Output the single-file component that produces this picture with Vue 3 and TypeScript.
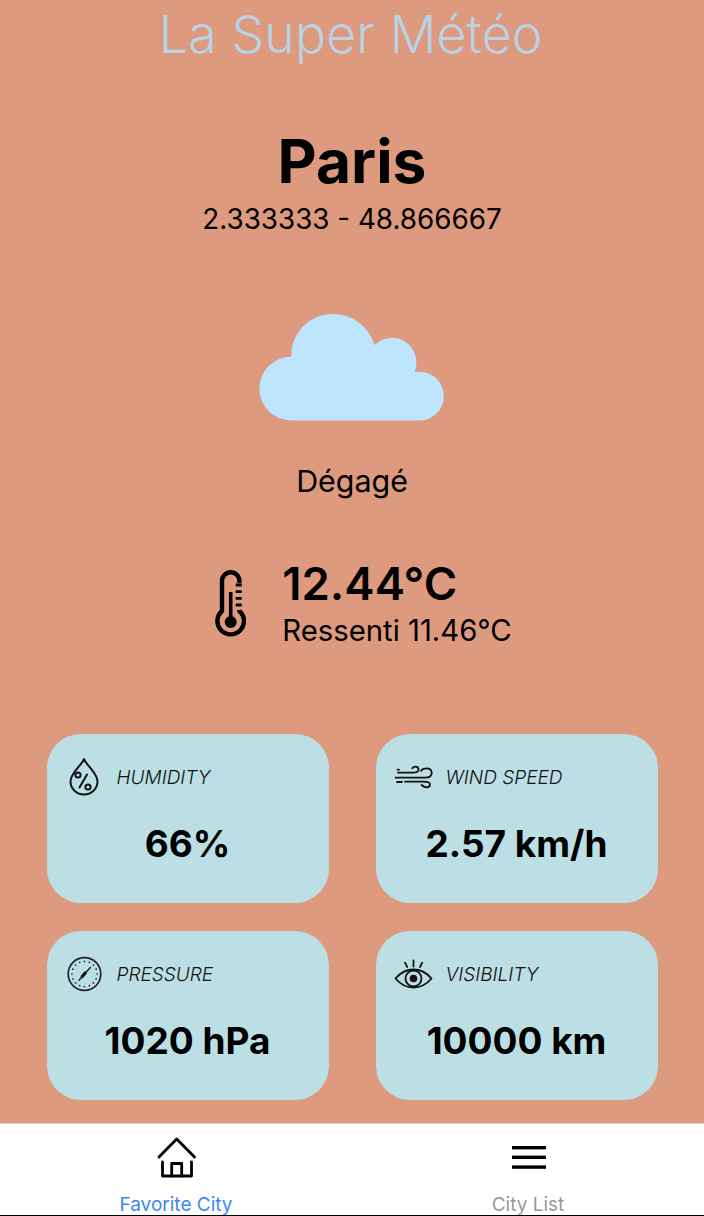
<script setup lang="ts">
const stats = [
  { key: 'humidity', label: 'HUMIDITY', value: '66%' },
  { key: 'wind', label: 'WIND SPEED', value: '2.57 km/h' },
  { key: 'pressure', label: 'PRESSURE', value: '1020 hPa' },
  { key: 'visibility', label: 'VISIBILITY', value: '10000 km' },
]
const dots = Array.from({ length: 16 }, (_, i) => {
  const a = (i * Math.PI) / 8
  return { x: 19.5 + 12.6 * Math.cos(a), y: 20 + 12.6 * Math.sin(a) }
})
</script>

<template>
  <div class="page">
    <main class="main">
      <h1 class="title">La Super Météo</h1>
      <section class="city">
        <h2 class="name">Paris</h2>
        <p class="coords">2.333333 - 48.866667</p>
      </section>
      <svg class="cloud" viewBox="0 0 186 108" width="186" height="108">
        <path d="M32.2 107.5 A31.9 31.9 0 0 1 32.2 43.7 A41.3 41.3 0 0 1 73.5 1 A43 43 0 0 1 115.5 32 A24.5 24.5 0 0 1 155.5 58.7 L160.5 58.7 A24.4 24.4 0 0 1 160.5 107.5 Z" fill="#bde6fe"/>
      </svg>
      <p class="desc">Dégagé</p>
      <section class="temp">
        <svg class="thermo" viewBox="0 0 32 68" width="32" height="68" fill="none" stroke="#000">
          <path d="M25.4 13 V11 A8.7 8.7 0 0 0 8 11 V41 A13.3 13.3 0 1 0 25.4 41 V40" stroke-width="4.4"/>
          <path d="M16.7 22 V52" stroke-width="3.6"/>
          <path d="M21.7 15 H27.7 M21.7 21.7 H27.7 M21.7 28.3 H27.7 M21.7 35 H27.7" stroke-width="2.8"/>
          <circle cx="16.7" cy="52" r="6" fill="#000" stroke="none"/>
        </svg>
        <div>
          <div class="deg">12.44°C</div>
          <div class="feel">Ressenti 11.46°C</div>
        </div>
      </section>
      <section class="grid">
        <article v-for="s in stats" :key="s.key" class="card">
          <header class="head">
            <span class="ico">
              <svg v-if="s.key === 'humidity'" viewBox="0 0 40 40" width="40" height="40" fill="none" stroke="#111" stroke-width="2">
                <path d="M19 2 C21 8 32.5 16 32.5 24.5 A13.5 13 0 0 1 5.5 24.5 C5.5 16 17 8 19 2 Z" stroke-linejoin="round"/>
                <circle cx="13" cy="18" r="2.6"/>
                <circle cx="23" cy="30" r="2.6"/>
                <path d="M14.5 30.5 L22 17.5" stroke-linecap="round"/>
              </svg>
              <svg v-else-if="s.key === 'wind'" viewBox="0 0 40 40" width="40" height="40" fill="none" stroke="#111" stroke-width="1.8" stroke-linecap="round">
                <path d="M1.5 20.7 H31 C35 20.7 37.7 19 37.7 16 C37.7 13 35.5 11.3 32.7 11.3 C30 11.3 28 12.3 27 13.7"/>
                <path d="M4 15.7 H19 C22.5 15.7 24.5 14.8 24.5 12.8 C24.5 10.8 23 9.7 21.5 9.7 C20 9.7 19 10.3 18.3 11.3"/>
                <path d="M11 24.7 H29.5 C33.5 24.7 36 25.5 36 27.3 C36 29.3 34.5 30.3 32.7 30.3 C30.5 30.3 29 29.3 27.7 28"/>
                <path d="M3.5 12.7 H5 M3 25 H8"/>
              </svg>
              <svg v-else-if="s.key === 'pressure'" viewBox="0 0 40 40" width="40" height="40" fill="none" stroke="#222">
                <circle cx="19.5" cy="20" r="16.3" stroke-width="1.7"/>
                <circle v-for="(d, i) in dots" :key="i" :cx="d.x" :cy="d.y" r=".85" fill="#222" stroke="none"/>
                <path d="M14 26.3 L25.3 13.5" stroke-width="1.4" stroke-linecap="round"/>
                <path d="M16.5 23.5 L21 18" stroke="#111" stroke-width="3"/>
              </svg>
              <svg v-else viewBox="0 0 40 40" width="40" height="40" fill="none" stroke="#111" stroke-width="1.8" stroke-linecap="round">
                <path d="M1.5 24.5 C7 18 13 15.5 19.5 15.5 C26 15.5 32 18 37.5 24.5 C32 31 26 33.5 19.5 33.5 C13 33.5 7 31 1.5 24.5 Z" stroke-linejoin="round"/>
                <circle cx="19.5" cy="24.5" r="8"/>
                <circle cx="19.5" cy="24.5" r="3.8" fill="#111" stroke="none"/>
                <path d="M19.5 6.5 V12.5 M11 8.7 L13.2 13 M28.2 8.7 L26 13"/>
              </svg>
            </span>
            <span class="label">{{ s.label }}</span>
          </header>
          <div class="value">{{ s.value }}</div>
        </article>
      </section>
    </main>
    <nav class="tabs">
      <div class="tab active">
        <svg viewBox="0 0 40 40" width="40" height="40" fill="none" stroke="#000" stroke-width="2.8" stroke-linecap="round" stroke-linejoin="round">
          <path d="M3 20 L20.7 2 L38.5 20"/>
          <path d="M6.5 25 V39 H35.5 V25"/>
          <path d="M15.7 39 V26.5 H25.7 V39"/>
        </svg>
        <span>Favorite City</span>
      </div>
      <div class="tab">
        <svg viewBox="0 0 40 40" width="40" height="40" fill="#000">
          <rect x="3" y="9" width="34" height="3.4"/>
          <rect x="3" y="18.6" width="34" height="3.4"/>
          <rect x="3" y="28.4" width="34" height="3.4"/>
        </svg>
        <span>City List</span>
      </div>
    </nav>
  </div>
</template>

<style>
html, body { margin: 0; padding: 0; }
</style>

<style scoped>
.page {
  width: 704px;
  height: 1216px;
  display: flex;
  flex-direction: column;
  overflow: hidden;
  background: #dd9a7e;
  color: #000;
  font-family: Inter, "Liberation Sans", sans-serif;
}
.main {
  flex: 1;
  display: flex;
  flex-direction: column;
  align-items: center;
  min-height: 0;
}
.title {
  margin: 6px 3px 0 0;
  font-size: 52px;
  line-height: 58px;
  font-weight: 340;
  color: #bbd2e4;
}
.city { margin-top: 61px; text-align: center; }
.name { margin: 0; font-size: 60.5px; line-height: 72px; font-weight: 700; }
.coords { margin: 5px 0 0; font-size: 27.8px; line-height: 34px; font-weight: 400; }
.cloud { margin-top: 77px; display: block; }
.desc { margin: 41px 0 0; font-size: 30.4px; line-height: 38px; }
.temp {
  margin-top: 58px;
  padding-left: 22px;
  display: flex;
  align-items: center;
  gap: 36px;
}
.deg { font-size: 45.5px; line-height: 52px; font-weight: 600; }
.feel { margin-top: 2px; font-size: 29.3px; line-height: 37px; }
.grid {
  margin-top: 85px;
  display: grid;
  grid-template-columns: 282px 282px;
  grid-auto-rows: 169px;
  gap: 28px 47px;
}
.card {
  background: #bbdfe5;
  border-radius: 34px;
  display: flex;
  flex-direction: column;
  padding: 23px 0 0 18px;
  box-sizing: border-box;
}
.head { display: flex; align-items: center; height: 40px; gap: 12px; }
.ico { width: 40px; height: 40px; display: block; }
.ico svg { display: block; overflow: visible; }
.label { font-size: 19px; font-style: italic; color: #111; font-weight: 350; }
.value {
  margin: 25px 0 0 -18px;
  text-align: center;
  font-size: 37px;
  line-height: 44px;
  font-weight: 650;
}
.tabs {
  height: 93px;
  box-sizing: border-box;
  flex: none;
  display: flex;
  background: #fff;
  border-top: 1px solid #d8d8d8;
  border-bottom: 1px solid #000;
}
.tab {
  flex: 1;
  display: flex;
  flex-direction: column;
  align-items: center;
  padding-top: 13px;
  color: #999;
  font-size: 19px;
  line-height: 22px;
}
.tab svg { display: block; margin-bottom: 17px; overflow: visible; }
.tab:last-child svg { margin-left: 2px; }
.tab.active { color: #3b88f5; }
</style>
